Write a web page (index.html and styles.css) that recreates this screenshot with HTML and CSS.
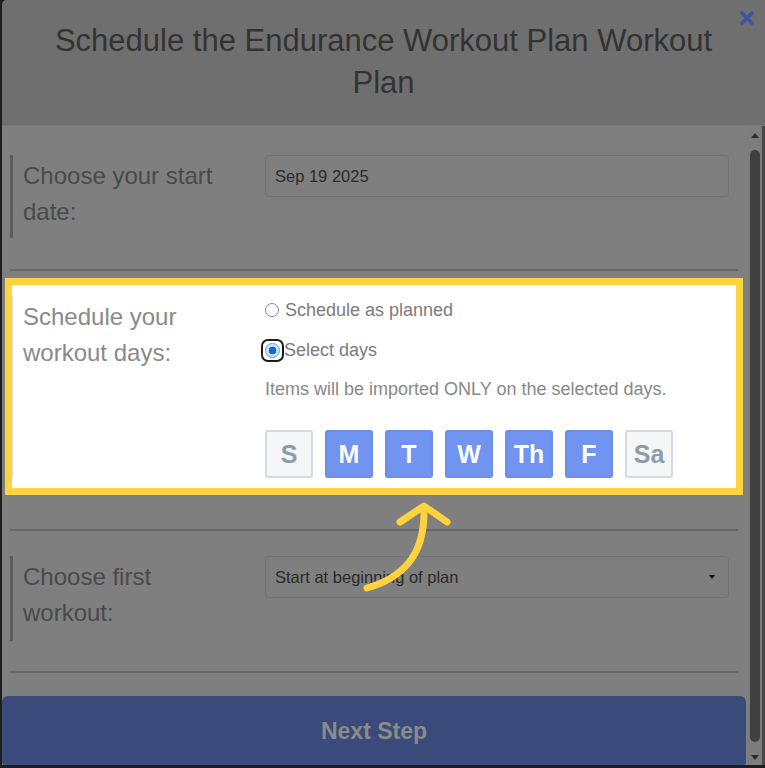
FILE: index.html
```html
<!DOCTYPE html>
<html lang="en">
<head>
<meta charset="utf-8">
<title>Schedule Workout Plan</title>
<link rel="stylesheet" href="styles.css">
</head>
<body>
<div class="modal">
  <header class="modal-head">
    <h1 class="title">Schedule the Endurance Workout Plan Workout Plan</h1>
    <button class="close" type="button" aria-label="Close">
      <svg width="16" height="16" viewBox="0 0 16 16"><path d="M3 3 L13 13 M13 3 L3 13" stroke="#3c54a3" stroke-width="3.6" stroke-linecap="round"/></svg>
    </button>
  </header>
  <div class="modal-body">
    <div class="content">
      <section class="row row-first">
        <div class="label">Choose your start date:</div>
        <div class="field"><div class="input">Sep 19 2025</div></div>
      </section>
      <hr class="divider">
      <div class="spotlight">
        <section class="row row-spot">
          <div class="label">Schedule your workout days:</div>
          <div class="field">
            <div class="opt"><span class="radio"></span>Schedule as planned</div>
            <div class="opt opt-checked"><span class="focus-ring"><span class="radio checked"></span></span>Select days</div>
            <p class="note">Items will be imported ONLY on the selected days.</p>
            <div class="days">
              <span class="day">S</span>
              <span class="day on">M</span>
              <span class="day on">T</span>
              <span class="day on">W</span>
              <span class="day on">Th</span>
              <span class="day on">F</span>
              <span class="day">Sa</span>
            </div>
          </div>
        </section>
      </div>
      <hr class="divider divider-2">
      <section class="row row-last">
        <div class="label">Choose first workout:</div>
        <div class="field"><div class="input select">Start at beginning of plan<span class="caret"></span></div></div>
      </section>
      <hr class="divider divider-3">
      <button class="next" type="button">Next Step</button>
    </div>
    <div class="scrollbar">
      <span class="sb-arrow sb-up"></span>
      <span class="thumb"></span>
      <span class="sb-arrow sb-down"></span>
    </div>
  </div>
  <svg class="pointer" width="765" height="768" viewBox="0 0 765 768">
    <path d="M367 588 C402 578 425 556 424 509" fill="none" stroke="#ffd23f" stroke-width="7" stroke-linecap="round"/>
    <path d="M400 522 L424 506 L447 522" fill="none" stroke="#ffd23f" stroke-width="7" stroke-linecap="round" stroke-linejoin="round"/>
  </svg>
</div>
</body>
</html>
```
FILE: styles.css
```css
html, body {
  margin: 0;
  padding: 0;
}
body {
  background: #1e1e1e;
  font-family: "Liberation Sans", Arial, sans-serif;
  width: 765px;
  height: 768px;
  overflow: hidden;
}
.modal {
  margin-left: 2px;
  width: 763px;
  height: 765px;
  background: #7f7f7f;
  border-radius: 5px 0 0 0;
  display: flex;
  flex-direction: column;
  position: relative;
}
.modal-head {
  position: relative;
  background: #6f6f6f;
  border-bottom: 1px solid #787878;
  padding: 20px 45px 21px;
  border-radius: 5px 0 0 0;
}
.title {
  margin: 0;
  font-weight: 400;
  font-size: 31px;
  line-height: 42px;
  text-align: center;
  color: #333;
}
.close {
  position: absolute;
  top: 9px;
  right: 9px;
  width: 18px;
  height: 18px;
  padding: 0;
  border: 0;
  background: none;
  display: flex;
  align-items: center;
  justify-content: center;
}
.modal-body {
  flex: 1;
  display: flex;
  min-height: 0;
}
.content {
  flex: 1;
  padding: 29px 10px 0 8px;
  display: flex;
  flex-direction: column;
}
.row {
  display: grid;
  grid-template-columns: 255px 464px;
}
.label {
  border-left: 3px solid #5e5e5e;
  padding: 3px 25px 8px 10px;
  font-size: 24px;
  line-height: 36px;
  color: #4a4a4a;
}
.row-first {
  margin-bottom: 31px;
}
.row-last {
  margin-top: 25px;
  margin-bottom: 30px;
}
.row-last .label {
  padding-bottom: 10px;
}
.input {
  height: 42px;
  box-sizing: border-box;
  border: 1px solid #747474;
  border-radius: 4px;
  padding: 0 9px;
  display: flex;
  align-items: center;
  font-size: 16.5px;
  color: #2b2b2b;
}
.select {
  justify-content: space-between;
  padding-right: 13px;
}
.caret {
  width: 0;
  height: 0;
  border-left: 3.5px solid transparent;
  border-right: 3.5px solid transparent;
  border-top: 4px solid #111;
}
.divider {
  border: 0;
  height: 2px;
  background: #676767;
  margin: 0;
}
.divider-2 {
  margin-top: 41px;
}
.spotlight {
  margin: 14px 2px 0;
  background: #fff;
  box-shadow: 0 0 0 7px #ffd23f;
  padding: 11px 0 10px;
  position: relative;
  z-index: 1;
}
.row-spot {
  grid-template-columns: 253px 464px;
}
.row-spot .label {
  border-left: 1px solid #dde1e8;
  padding: 3px 25px 0 10px;
  color: #8a8a8a;
}
.field {
  display: flex;
  flex-direction: column;
}
.opt {
  display: flex;
  align-items: center;
  height: 28px;
  font-size: 18px;
  color: #7b7b7b;
}
.opt + .opt {
  margin-top: 12px;
}
.radio {
  width: 14px;
  height: 14px;
  box-sizing: border-box;
  border-radius: 50%;
  border: 1px solid #8d8d8d;
  background: #fff;
  margin-right: 6px;
}
.focus-ring {
  display: flex;
  align-items: center;
  justify-content: center;
  width: 23px;
  height: 23px;
  box-sizing: border-box;
  border: 2.5px solid #1c1c1c;
  border-radius: 7px;
  margin-left: -4px;
  margin-right: 0;
}
.radio.checked {
  width: 15px;
  height: 15px;
  margin: 0;
  border: 1px solid #5f9be8;
  background: radial-gradient(circle, #0b6ad9 0 3.6px, #cfe3fb 4.1px);
}
.note {
  margin: 11px 0 0;
  height: 28px;
  line-height: 28px;
  font-size: 18px;
  color: #888;
}
.days {
  margin-top: 27px;
  display: flex;
  gap: 12px;
}
.day {
  width: 48px;
  height: 48px;
  box-sizing: border-box;
  border: 2px solid #d3dae0;
  border-radius: 3px;
  background: #f4f6f7;
  color: #8b9dab;
  font-weight: 700;
  font-size: 25px;
  display: flex;
  align-items: center;
  justify-content: center;
}
.day.on {
  background: #7194f0;
  border-color: #6c8ee9;
  color: #fff;
}
.next {
  margin: 23px -8px 0;
  height: 69px;
  border: 0;
  border-radius: 6px 6px 3px 3px;
  background: #394a7b;
  color: #8b8b8b;
  font-family: "Liberation Sans", Arial, sans-serif;
  font-weight: 700;
  font-size: 23px;
  padding: 2px 0 0;
}
.scrollbar {
  width: 14px;
  border-right: 3px solid #474747;
  background: #7d7d7d;
  display: flex;
  flex-direction: column;
  align-items: center;
}
.thumb {
  flex: 1;
  width: 10px;
  background: #404040;
  border-radius: 5px;
}
.sb-arrow {
  width: 0;
  height: 0;
  border-left: 4px solid transparent;
  border-right: 4px solid transparent;
}
.sb-up {
  margin: 7px 0 12px;
  border-bottom: 5px solid #2c2c2c;
}
.sb-down {
  margin: 13px 0 5px;
  border-top: 5px solid #2c2c2c;
}
.pointer {
  position: absolute;
  left: -2px;
  top: 0;
  z-index: 2;
  pointer-events: none;
}
```
